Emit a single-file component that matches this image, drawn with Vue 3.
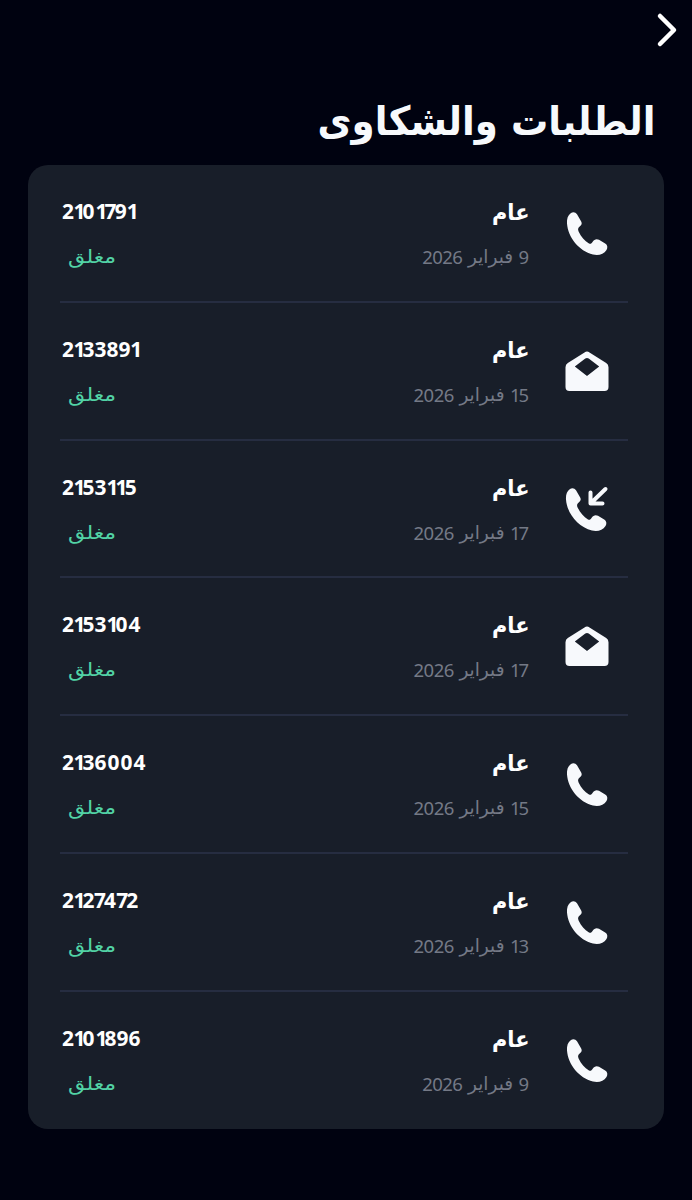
<template>
  <div class="page" dir="rtl">
    <header class="top-bar">
      <button class="back" aria-label="رجوع">
        <svg width="24" height="36" viewBox="0 0 24 36">
          <path d="M4 4 L18 18 L4 32" />
        </svg>
      </button>
    </header>

    <h1 class="title"><span>الطلبات والشكاوى</span></h1>

    <div class="card">
      <div v-for="item in requests" :key="item.id" class="row">
        <div class="icon">
          <svg v-if="item.type === 'mail'" width="48" height="48" viewBox="0 0 48 48">
            <path
              fill-rule="evenodd"
              d="M21.5 4.4 Q24 2.8 26.5 4.4 L43.2 15 Q45.5 16.6 45.5 19.2 V39 Q45.5 43 41.5 43 H6.5 Q2.5 43 2.5 39 V19.2 Q2.5 16.6 4.8 15 Z M22.3 10.6 L11.8 18.5 L24 28 L36.2 18.5 L25.7 10.6 Q24 9.6 22.3 10.6 Z"
            />
          </svg>
          <svg v-else width="48" height="48" viewBox="0 0 48 48" :class="{ incoming: item.type === 'incoming' }">
            <path :d="phonePath" />
            <path v-if="item.type === 'incoming'" class="arrow" d="M43.5 3 L29 17 M28.5 6.5 V17.5 H40.5" />
          </svg>
        </div>
        <div class="info">
          <div class="kind"><span>عام</span></div>
          <div class="date">
            <bdi class="num"><span v-for="(d, i) in item.day" :key="i" :class="'d' + d">{{ d }}</span></bdi>
            <span class="month">فبراير</span>
            <bdi class="num year">2026</bdi>
          </div>
        </div>
        <div class="side">
          <div class="number" dir="ltr"><span v-for="(d, i) in item.id" :key="i" :class="'d' + d">{{ d }}</span></div>
          <div class="status"><span>مغلق</span></div>
        </div>
      </div>
    </div>
  </div>
</template>

<script setup>
import { ref } from 'vue';

const phonePath =
  'M8 3 C10 1.5 12.5 2 14 4.2 L18.2 11.5 C19.3 13.5 18.5 15 17 16.3 C15.2 17.8 14.5 19 15.6 21.4 C18 26.5 21.6 30.8 26 33.4 C27.5 34.2 28.5 33.6 29.5 32 C31.2 29.4 33.5 28.6 36 29.8 L42.2 33.6 C44.7 35.2 44.8 37.8 43.5 40 C40.8 44.4 35.5 45.9 30 44.6 C16 41 5 27.5 4 13.5 C3.7 8.7 4.8 5.2 8 3 Z';

const requests = ref([
  { id: '2101791', day: '9', type: 'phone' },
  { id: '2133891', day: '15', type: 'mail' },
  { id: '2153115', day: '17', type: 'incoming' },
  { id: '2153104', day: '17', type: 'mail' },
  { id: '2136004', day: '15', type: 'phone' },
  { id: '2127472', day: '13', type: 'phone' },
  { id: '2101896', day: '9', type: 'phone' }
]);
</script>

<style>
body {
  margin: 0;
  background: #000210;
}
</style>

<style scoped>
.page {
  box-sizing: border-box;
  height: 1200px;
  padding: 12px 28px 0;
  background: #000210;
  color: #f7f9fc;
  font-family: 'Noto Sans', 'DejaVu Sans', sans-serif;
  overflow: hidden;
}

.top-bar {
  display: flex;
  height: 36px;
  margin-right: -16px;
}
.back {
  padding: 0;
  border: none;
  background: none;
  height: 36px;
}
.back path {
  fill: none;
  stroke: #fff;
  stroke-width: 4.5;
  stroke-linecap: round;
  stroke-linejoin: round;
}

.title {
  height: 117px;
  margin: 0;
  padding: 43px 8px 0 0;
  box-sizing: border-box;
  font-family: 'DejaVu Sans', sans-serif;
  font-size: 40px;
  font-weight: 700;
  line-height: 60px;
  white-space: nowrap;
}
.title span,
.kind span,
.status span,
.month {
  display: inline-block;
}
.title span {
  transform: scaleX(0.93);
  transform-origin: right;
}

.card {
  box-sizing: border-box;
  height: 964px;
  padding: 0 36px 0 32px;
  background: #181e29;
  border-radius: 20px;
}
.row {
  box-sizing: border-box;
  display: flex;
  height: 137.8px;
  border-bottom: 2px solid #262d41;
}
.row:last-child {
  border-bottom: none;
}

/* 图标 */
.icon {
  width: 48px;
  margin: 45px 17px 0 0;
}
.icon svg {
  display: block;
  fill: #f7f9fc;
}
.icon .incoming {
  margin-right: 1px;
}
.icon .arrow {
  fill: none;
  stroke: #f7f9fc;
  stroke-width: 4;
  stroke-linecap: round;
  stroke-linejoin: round;
}

.info {
  flex: 1;
  padding: 30px 34px 0 0;
}
.kind {
  height: 34px;
  font-family: 'DejaVu Sans', sans-serif;
  font-size: 22px;
  font-weight: 700;
  line-height: 35px;
  color: #fff;
}
.kind span {
  transform: scaleX(0.95);
  transform-origin: right;
}
.date {
  display: flex;
  gap: 5.5px;
  margin-top: 12px;
  font-size: 18.5px;
  line-height: 32px;
  color: #747986;
}
.date .num {
  letter-spacing: -0.2px;
}
.date .year {
  letter-spacing: -0.5px;
}
.date .d1 {
  letter-spacing: -2px;
}
.month {
  font-family: 'DejaVu Sans', sans-serif;
}

.side {
  padding: 29px 0 0 2px;
  direction: ltr;
}
.number {
  height: 34px;
  font-size: 22px;
  font-weight: 700;
  line-height: 33px;
  color: #fff;
  transform: scaleX(0.95);
  transform-origin: left;
}
.number .d1 {
  letter-spacing: -3px;
}
.number .d7 {
  letter-spacing: -2px;
}
.number .d2 {
  letter-spacing: -0.6px;
}
.number .d0,
.number .d4,
.number .d6 {
  letter-spacing: 1.1px;
}
.number .d4 {
  letter-spacing: 0.3px;
}
.status {
  margin: 12px 0 0 6px;
  font-family: 'DejaVu Sans', sans-serif;
  font-size: 19px;
  line-height: 32px;
  color: #52d3a5;
}
.status span {
  transform: scaleX(1.16);
  transform-origin: left;
}
</style>
